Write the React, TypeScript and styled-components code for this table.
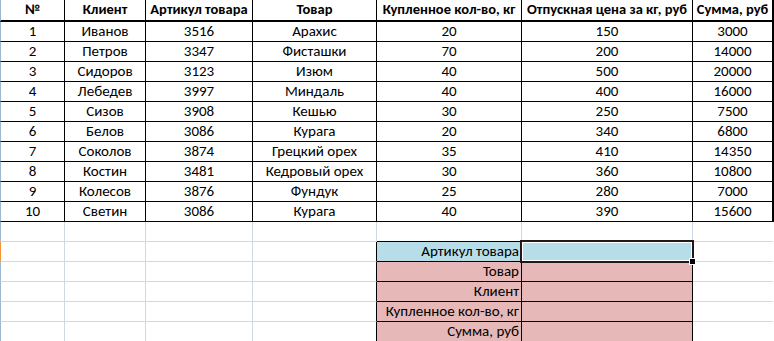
import styled, { createGlobalStyle, css } from 'styled-components';

const GlobalStyle = createGlobalStyle`
  html, body {
    margin: 0;
    padding: 0;
    background: #ffffff;
  }
  body {
    font-family: 'Carlito', 'Lato', 'Liberation Sans', sans-serif;
    color: #000000;
  }
`;

const GRID = '#d0d7e5';
const EDGE = '#9eb6ce';
const PINK = '#e6b8b7';
const BLUE = '#b7dee8';

const COLS = [65, 81, 107, 124, 145, 171, 81];

const Sheet = styled.table`
  border-collapse: separate;
  border-spacing: 0;
  table-layout: fixed;
  width: 774px;
  font-size: 15px;
`;

const Row = styled.tr<{ $active?: boolean }>`
  & > td:first-child {
    border-left: 1px solid ${({ $active }) => ($active ? '#f29436' : EDGE)};
  }
`;

const cellBase = css`
  box-sizing: border-box;
  padding: 0 2px 1px;
  line-height: 18px;
  vertical-align: bottom;
  white-space: nowrap;
  overflow: hidden;
  text-align: center;
`;

const HeadCell = styled.td<{ $last?: boolean }>`
  ${cellBase};
  height: 22px;
  font-size: 14.5px;
  font-weight: 700;
  padding-bottom: 2px;
  border-right: ${({ $last }) => ($last ? '2px' : '1px')} solid #000;
  border-bottom: 2px solid #000;
`;

const DataCell = styled.td<{ $last?: boolean; $first?: boolean }>`
  ${cellBase};
  height: ${({ $first }) => ($first ? '19px' : '20px')};
  border-right: ${({ $last }) => ($last ? '2px' : '1px')} solid #000;
  border-bottom: 1px solid #000;
`;

const GridCell = styled.td<{ $edgeRight?: boolean; $edgeBottom?: boolean; $last?: boolean }>`
  ${cellBase};
  height: 20px;
  border-right: ${({ $last }) => ($last ? '2px' : '1px')} solid
    ${({ $edgeRight, $last }) => ($edgeRight ? '#000' : $last ? 'transparent' : GRID)};
  border-bottom: 1px solid ${({ $edgeBottom }) => ($edgeBottom ? '#000' : GRID)};
`;

const FormLabel = styled.td<{ $accent?: boolean }>`
  ${cellBase};
  height: 20px;
  text-align: right;
  padding-right: 2px;
  background: ${({ $accent }) => ($accent ? BLUE : PINK)};
  border-right: 1px solid #000;
  border-bottom: 1px solid #000;
`;

const FormInput = styled.td<{ $accent?: boolean; $selected?: boolean }>`
  ${cellBase};
  overflow: visible;
  height: 20px;
  position: relative;
  background: ${({ $accent }) => ($accent ? BLUE : PINK)};
  border-right: 1px solid #000;
  border-bottom: 1px solid #000;

  ${({ $selected }) =>
    $selected &&
    css`
      &::after {
        content: '';
        position: absolute;
        left: -2px;
        top: -2px;
        right: -2px;
        bottom: -2px;
        border: 2px solid #1e1a1a;
        box-shadow: inset 0 0 0 1px #ffffff;
        pointer-events: none;
        z-index: 1;
      }
      &::before {
        content: '';
        position: absolute;
        right: -4px;
        bottom: -4px;
        width: 5px;
        height: 5px;
        background: #000;
        border: 1px solid #fff;
        z-index: 2;
      }
    `}
`;

const HEADERS = [
  '№',
  'Клиент',
  'Артикул товара',
  'Товар',
  'Купленное кол-во, кг',
  'Отпускная цена за кг, руб',
  'Сумма, руб',
];

const DATA: (string | number)[][] = [
  [1, 'Иванов', 3516, 'Арахис', 20, 150, 3000],
  [2, 'Петров', 3347, 'Фисташки', 70, 200, 14000],
  [3, 'Сидоров', 3123, 'Изюм', 40, 500, 20000],
  [4, 'Лебедев', 3997, 'Миндаль', 40, 400, 16000],
  [5, 'Сизов', 3908, 'Кешью', 30, 250, 7500],
  [6, 'Белов', 3086, 'Курага', 20, 340, 6800],
  [7, 'Соколов', 3874, 'Грецкий орех', 35, 410, 14350],
  [8, 'Костин', 3481, 'Кедровый орех', 30, 360, 10800],
  [9, 'Колесов', 3876, 'Фундук', 25, 280, 7000],
  [10, 'Светин', 3086, 'Курага', 40, 390, 15600],
];

const FORM = ['Артикул товара', 'Товар', 'Клиент', 'Купленное кол-во, кг', 'Сумма, руб'];

const App = () => {
  return (
    <>
      <GlobalStyle />
      <Sheet>
        <colgroup>
          {COLS.map((w, i) => (
            <col key={i} style={{ width: w }} />
          ))}
        </colgroup>
        <tbody>
          <Row>
            {HEADERS.map((h, i) => (
              <HeadCell key={h} $last={i === HEADERS.length - 1}>
                {h}
              </HeadCell>
            ))}
          </Row>

          {DATA.map((row, r) => (
            <Row key={r}>
              {row.map((v, i) => (
                <DataCell key={i} $first={r === 0} $last={i === row.length - 1}>
                  {v}
                </DataCell>
              ))}
            </Row>
          ))}

          <Row>
            <GridCell />
            <GridCell />
            <GridCell />
            <GridCell />
            <GridCell $edgeBottom />
            <GridCell $edgeBottom />
            <GridCell $last />
          </Row>

          {FORM.map((label, i) => (
            <Row key={label} $active={i === 0}>
              <GridCell />
              <GridCell />
              <GridCell />
              <GridCell $edgeRight />
              <FormLabel $accent={i === 0}>{label}</FormLabel>
              <FormInput $accent={i === 0} $selected={i === 0} />
              <GridCell $last />
            </Row>
          ))}
        </tbody>
      </Sheet>
    </>
  );
};

export default App;
